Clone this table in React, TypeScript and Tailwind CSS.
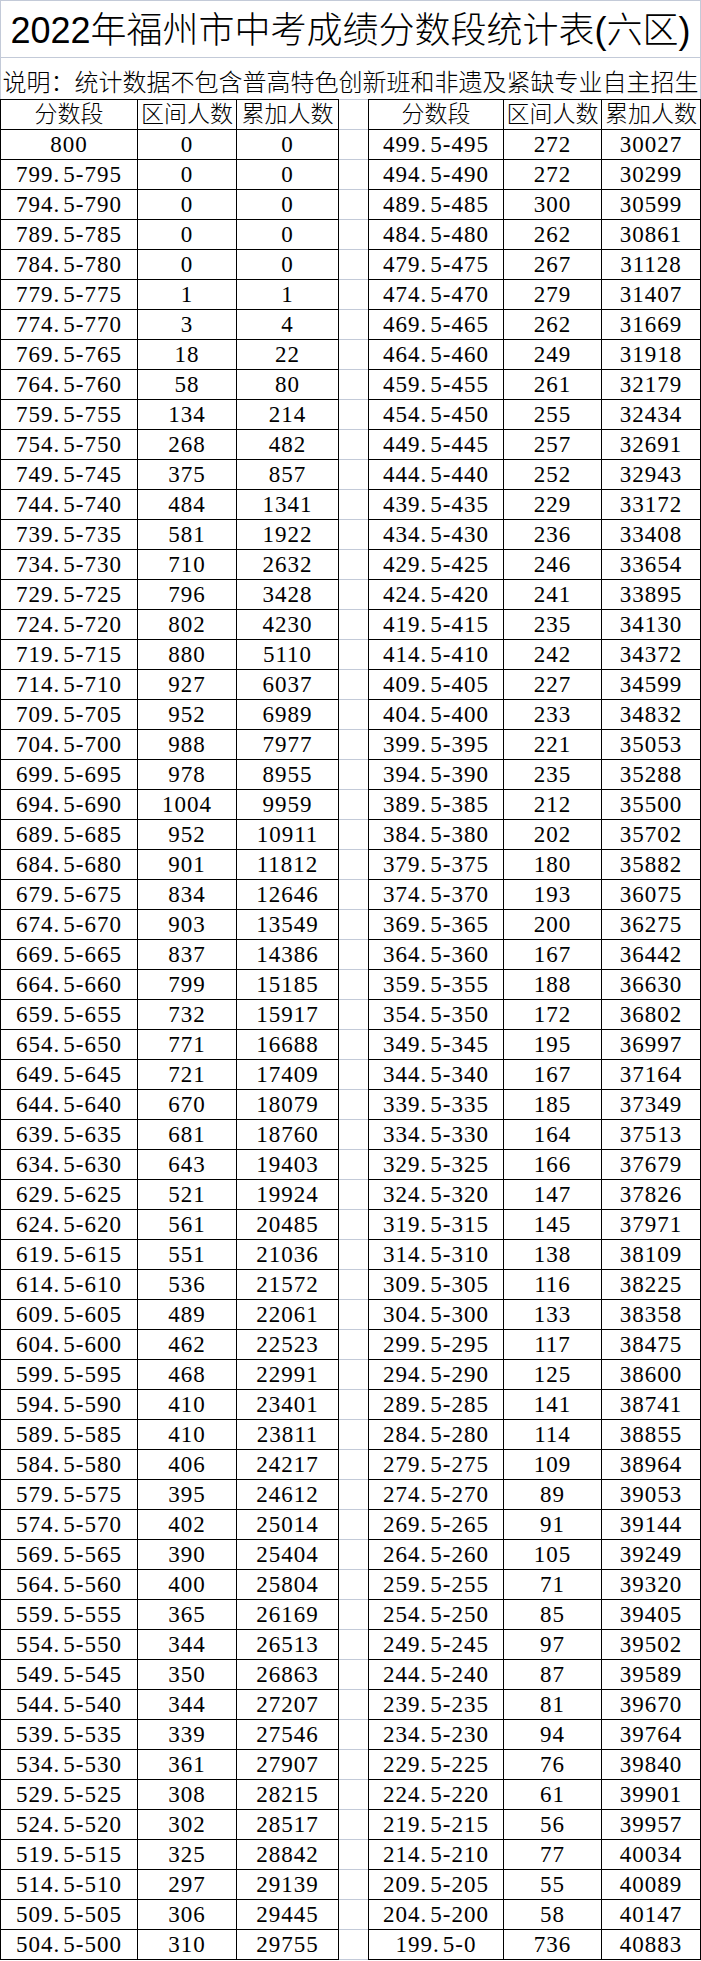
import React from 'react'

const LEFT_COUNTS = [
  0, 0, 0, 0, 0, 1, 3, 18, 58, 134, 268, 375, 484, 581, 710, 796, 802, 880, 927, 952, 988, 978, 1004, 952, 901,
  834, 903, 837, 799, 732, 771, 721, 670, 681, 643, 521, 561, 551, 536, 489, 462, 468, 410, 410, 406, 395, 402, 390,
  400, 365, 344, 350, 344, 339, 361, 308, 302, 325, 297, 306, 310,
]

const RIGHT_COUNTS = [
  272, 272, 300, 262, 267, 279, 262, 249, 261, 255, 257, 252, 229, 236, 246, 241, 235, 242, 227, 233, 221, 235, 212,
  202, 180, 193, 200, 167, 188, 172, 195, 167, 185, 164, 166, 147, 145, 138, 116, 133, 117, 125, 141, 114, 109, 89,
  91, 105, 71, 85, 97, 87, 81, 94, 76, 61, 56, 77, 55, 58, 736,
]

type Line = { band: string; count: number; total: number }

function buildRows(): { left: Line[]; right: Line[] } {
  let total = 0
  const left = LEFT_COUNTS.map((count, i) => {
    total += count
    const band = i === 0 ? '800' : `${805 - 5 * i - 0.5}-${800 - 5 * i}`
    return { band, count, total }
  })
  const right = RIGHT_COUNTS.map((count, j) => {
    total += count
    const band = j === 60 ? '199.5-0' : `${499.5 - 5 * j}-${495 - 5 * j}`
    return { band, count, total }
  })
  return { left, right }
}

// half-width period like the spreadsheet's SimSun digits
function Band({ text }: { text: string }) {
  const dot = text.indexOf('.')
  if (dot < 0) return <>{text}</>
  return (
    <>
      {text.slice(0, dot)}
      <span className="mr-[3px]">.</span>
      {text.slice(dot + 1)}
    </>
  )
}

const cell = 'flex items-center justify-center border-r border-b border-black whitespace-nowrap'
const gap = 'w-[29px] border-b border-[#c3cad8]'

function Row({ a, b, c, e, f, g, head }: { a: React.ReactNode; b: string; c: string; e: React.ReactNode; f: string; g: string; head?: boolean }) {
  const top = head ? 'border-t' : ''
  return (
    <div className={`flex ${head ? 'h-[31px]' : 'h-[30px]'}`}>
      <div className={`${cell} ${top} border-l w-[138px]`}>{a}</div>
      <div className={`${cell} ${top} w-[99px]`}>{b}</div>
      <div className={`${cell} ${top} w-[102px]`}>{c}</div>
      <div className={`${gap} ${head ? 'border-t border-t-[#c3cad8]' : ''}`} />
      <div className={`${cell} ${top} border-l w-[136px]`}>{e}</div>
      <div className={`${cell} ${top} w-[98px]`}>{f}</div>
      <div className={`${cell} ${top} w-[99px]`}>{g}</div>
    </div>
  )
}

export default function App() {
  const { left, right } = buildRows()

  return (
    <div className="w-[701px] bg-white text-black">
      <div
        className="h-[58px] flex items-center justify-center border border-[#c3cad8] text-[36px] font-light leading-none pt-1 whitespace-nowrap"
        style={{ fontFamily: '"Liberation Sans", "Noto Sans CJK SC", sans-serif' }}
      >
        2022年福州市中考成绩分数段统计表(六区)
      </div>
      <div
        className="h-[41px] flex items-center justify-center border-x border-[#c3cad8] text-[24px] font-light leading-none pt-1 whitespace-nowrap"
        style={{ fontFamily: '"Noto Sans CJK SC", sans-serif' }}
      >
        说明：统计数据不包含普高特色创新班和非遗及紧缺专业自主招生
      </div>
      <div
        className="text-[23px] leading-none tracking-[1px]"
        style={{ fontFamily: '"Liberation Serif", "Noto Sans CJK SC", serif' }}
      >
        <div className="tracking-normal font-light">
          <Row head a="分数段" b="区间人数" c="累加人数" e="分数段" f="区间人数" g="累加人数" />
        </div>
        {left.map((l, i) => {
          const r = right[i]
          return (
            <Row
              key={l.band}
              a={<Band text={l.band} />}
              b={String(l.count)}
              c={String(l.total)}
              e={<Band text={r.band} />}
              f={String(r.count)}
              g={String(r.total)}
            />
          )
        })}
      </div>
    </div>
  )
}
